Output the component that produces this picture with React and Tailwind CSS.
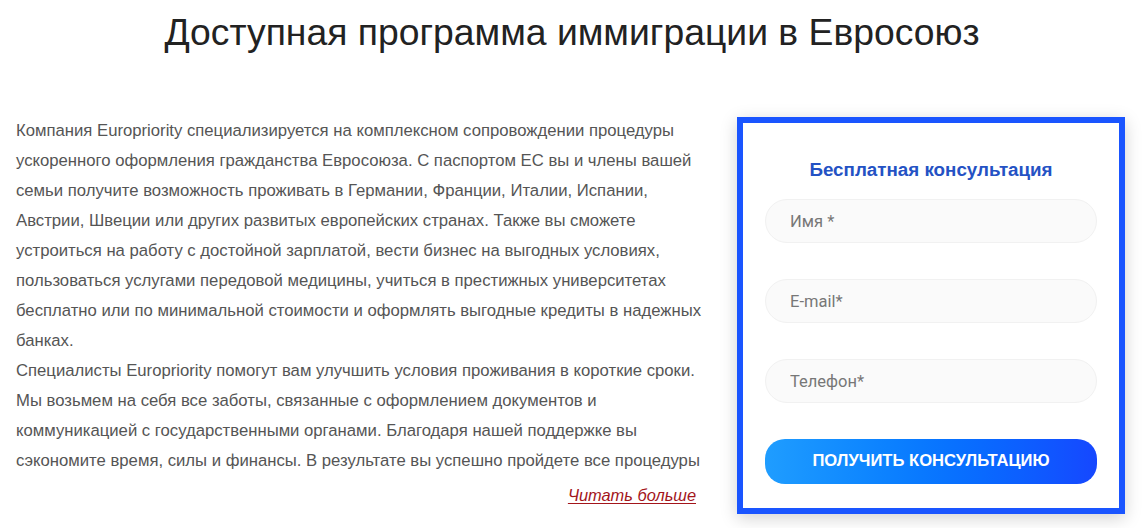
import React from 'react';

const text = [
  'Компания Europriority специализируется на комплексном сопровождении процедуры ускоренного оформления гражданства Евросоюза. С паспортом ЕС вы и члены вашей семьи получите возможность проживать в Германии, Франции, Италии, Испании, Австрии, Швеции или других развитых европейских странах. Также вы сможете устроиться на работу с достойной зарплатой, вести бизнес на выгодных условиях, пользоваться услугами передовой медицины, учиться в престижных университетах бесплатно или по минимальной стоимости и оформлять выгодные кредиты в надежных банках.',
  'Специалисты Europriority помогут вам улучшить условия проживания в короткие сроки. Мы возьмем на себя все заботы, связанные с оформлением документов и коммуникацией с государственными органами. Благодаря нашей поддержке вы сэкономите время, силы и финансы. В результате вы успешно пройдете все процедуры',
];

const fields = ['Имя *', 'E-mail*', 'Телефон*'];

const App = () => {
  return (
    <div className="min-h-screen bg-white font-['Liberation_Sans',Arial,sans-serif]">
      <h1 className="pt-[12px] text-center text-[37.3px] leading-[40px] font-normal text-[#222]">
        Доступная программа иммиграции в Евросоюз
      </h1>

      <div className="mt-[64px] flex items-start pl-[16px]">
        {/* About, collapsed preview */}
        <div className="w-[690px] shrink-0">
          <div className="h-[360px] text-[16.7px] leading-[30px] text-[#555]">
            {text.map((p, i) => (
              <p key={i}>{p}</p>
            ))}
          </div>
          <div className="mt-[8px] pr-[10px] text-right text-[16.4px] leading-[22px]">
            <a href="#" className="italic text-[#a3151b] underline underline-offset-2">
              Читать больше
            </a>
          </div>
        </div>

        {/* Consultation form */}
        <div className="ml-[31px] mt-[1px] w-[388px] border-[6px] border-[#1a55ff] bg-white px-[22px] pt-[35px] pb-[24px] shadow-[0_4px_16px_rgba(0,0,0,0.18)]">
          <h3 className="text-center text-[18.8px] leading-[24px] font-bold text-[#2452c4]">
            Бесплатная консультация
          </h3>
          <form className="mt-[17px] flex flex-col gap-[36px]" onSubmit={(e) => e.preventDefault()}>
            {fields.map((f) => (
              <input
                key={f}
                type="text"
                placeholder={f}
                className="h-[44px] w-full rounded-full border border-[#f1f1f1] bg-[#fafafa] px-[24px] font-['Roboto',sans-serif] text-[16.5px] text-[#444] placeholder:text-[#777] outline-none"
              />
            ))}
            <button
              type="submit"
              className="h-[45px] w-full rounded-[20px] bg-gradient-to-r from-[#1f9dff] to-[#1647ff] text-[16.6px] font-bold uppercase text-white"
            >
              Получить консультацию
            </button>
          </form>
        </div>
      </div>
    </div>
  );
};

export default App;
